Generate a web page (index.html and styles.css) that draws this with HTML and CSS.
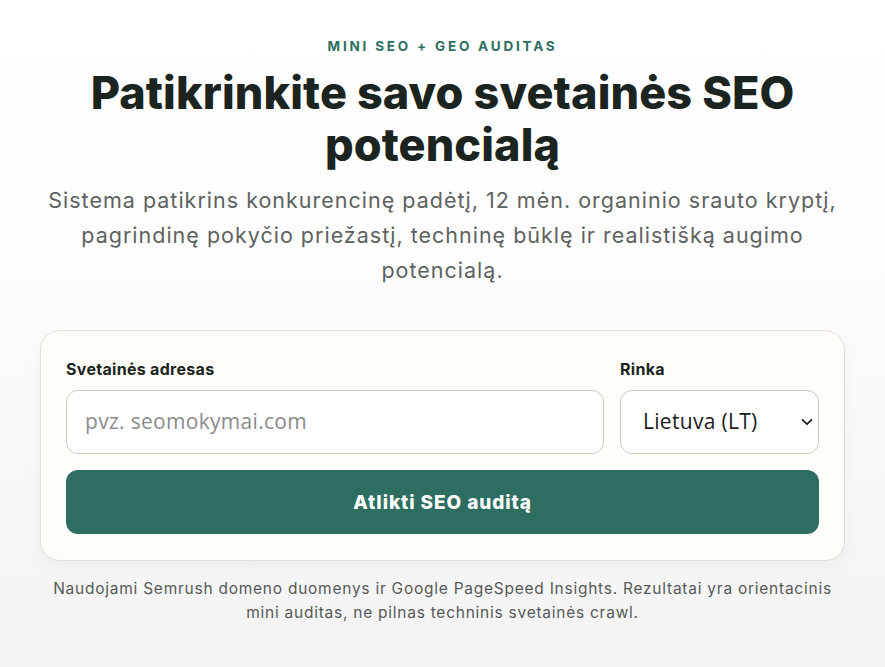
FILE: index.html
```html
<!DOCTYPE html>
<html lang="lt">
<head>
<meta charset="utf-8">
<title>Mini SEO + GEO auditas</title>
<link rel="stylesheet" href="styles.css">
</head>
<body>
<main class="hero">
  <p class="eyebrow">MINI SEO + GEO AUDITAS</p>
  <h1 class="title">Patikrinkite savo svetainės SEO potencialą</h1>
  <p class="lead">Sistema patikrins konkurencinę padėtį, 12 mėn. organinio srauto kryptį, pagrindinę pokyčio priežastį, techninę būklę ir realistišką augimo potencialą.</p>
  <form class="card" onsubmit="return false">
    <div class="fields">
      <label class="field field-url">
        <span class="label">Svetainės adresas</span>
        <input class="input" type="text" placeholder="pvz. seomokymai.com">
      </label>
      <label class="field field-market">
        <span class="label">Rinka</span>
        <span class="select-wrap">
          <select class="select">
            <option>Lietuva (LT)</option>
          </select>
          <svg class="chev" viewBox="0 0 12 8" width="12" height="8"><path d="M1.5 1.8 6 6.2 10.5 1.8" fill="none" stroke="#222" stroke-width="1.8" stroke-linecap="round" stroke-linejoin="round"/></svg>
        </span>
      </label>
    </div>
    <button class="btn" type="submit">Atlikti SEO auditą</button>
  </form>
  <p class="note">Naudojami Semrush domeno duomenys ir Google PageSpeed Insights. Rezultatai yra orientacinis mini auditas, ne pilnas techninis svetainės crawl.</p>
</main>
</body>
</html>
```

FILE: styles.css
```css
* { box-sizing: border-box; }
html, body { margin: 0; padding: 0; }
body {
  min-height: 667px;
  background: linear-gradient(180deg, #ffffff 0%, #fdfdfd 40%, #f3f3f4 100%);
  font-family: Inter, "Noto Sans", sans-serif;
  color: #1b2420;
}
.hero {
  width: 805px;
  margin: 0 auto;
  padding-top: 37px;
  display: flex;
  flex-direction: column;
  align-items: center;
}
.eyebrow {
  margin: 0;
  font-size: 13.5px;
  font-weight: 700;
  letter-spacing: 2.8px;
  color: #2d6e61;
  line-height: 18px;
}
.title {
  margin: 12px 0 0;
  font-size: 45px;
  font-weight: 800;
  letter-spacing: 0.1px;
  line-height: 52px;
  text-align: center;
  color: #1b2420;
  width: 780px;
}
.lead {
  margin: 12px 0 0;
  font-size: 21.5px;
  font-weight: 400;
  letter-spacing: 1px;
  line-height: 35px;
  text-align: center;
  color: #5e625f;
  width: 800px;
}
.card {
  width: 805px;
  margin-top: 42px;
  background: #fffdf9;
  border: 1px solid #e4dfd5;
  border-radius: 20px;
  padding: 28px 25px 26px;
  box-shadow: 0 6px 18px rgba(0,0,0,0.04);
  display: flex;
  flex-direction: column;
  gap: 16px;
}
.fields {
  display: flex;
  gap: 16px;
}
.field { display: flex; flex-direction: column; gap: 11px; }
.field-url { flex: 1; }
.field-market { width: 199px; }
.label {
  font-size: 16px;
  font-weight: 700;
  letter-spacing: 0.3px;
  color: #1b2420;
  line-height: 20px;
}
.input, .select {
  height: 64px;
  border: 1px solid #cfcac1;
  border-radius: 12px;
  background: #ffffff;
  font-family: "Open Sans", "Noto Sans", sans-serif;
  font-size: 21px;
  letter-spacing: 0.3px;
  color: #1b1b1b;
  outline: none;
}
.input { width: 100%; padding: 0 18px 2px; }
.input::placeholder { color: #8b8b8b; }
.select-wrap { position: relative; display: block; }
.select {
  width: 100%;
  appearance: none;
  -webkit-appearance: none;
  padding: 0 20px 2px 22px;
}
.chev { position: absolute; right: 6px; top: 28px; width: 12px; height: 8px; pointer-events: none; }
.btn {
  height: 64px;
  border: 0;
  border-radius: 12px;
  background: #2d6e61;
  color: #ffffff;
  font-family: Inter, "Noto Sans", sans-serif;
  font-size: 19px;
  font-weight: 800;
  letter-spacing: 0.9px;
  cursor: pointer;
}
.note {
  margin: 16px 0 0;
  font-size: 15.5px;
  letter-spacing: 0.75px;
  line-height: 24px;
  text-align: center;
  color: #555a57;
  width: 800px;
}
```
